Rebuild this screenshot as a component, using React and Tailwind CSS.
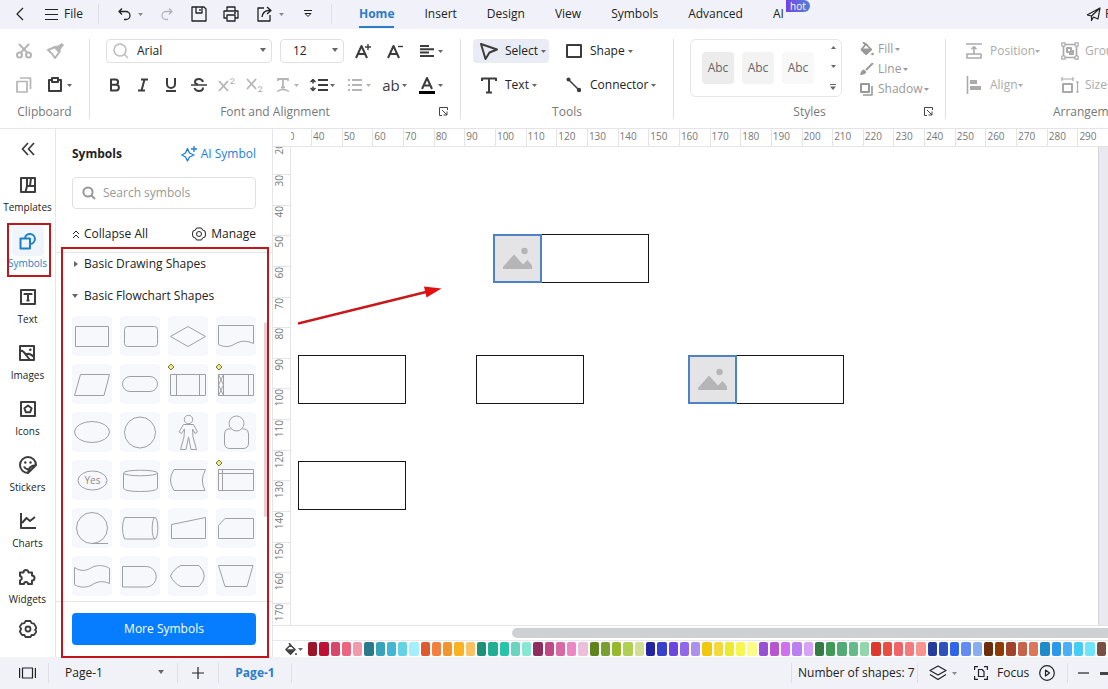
import { useState } from 'react';

const Svg = ({ w = 20, h = 20, sw = 2, className = '', children }) => (
    <svg
        width={w}
        height={h}
        viewBox={`0 0 ${w} ${h}`}
        fill="none"
        stroke="currentColor"
        strokeWidth={sw}
        strokeLinejoin="round"
        className={`shrink-0 ${className}`}
        aria-hidden="true"
    >
        {children}
    </svg>
);

const Caret = ({ className = 'text-[#666]' }) => (
    <svg width="5" height="3" viewBox="0 0 5 3" className={`shrink-0 ${className}`} aria-hidden="true">
        <path d="M0 0H5L2.5 3Z" fill="currentColor" />
    </svg>
);

const BigCaret = ({ className = '' }) => (
    <svg width="6" height="4" viewBox="0 0 6 4" className={`pointer-events-none absolute ${className}`} aria-hidden="true">
        <path d="M0 0H6L3 4Z" fill="#666" />
    </svg>
);

const Divider = ({ className = 'h-5' }) => <div className={`w-px shrink-0 bg-[#dfe0e6] ${className}`} />;

/* ---------- top bar ---------- */

const TABS = ['Home', 'Insert', 'Design', 'View', 'Symbols', 'Advanced'];

const TopBar = () => {
    const [active, setActive] = useState('Home');
    return (
        <header className="flex h-[29px] shrink-0 items-center overflow-hidden bg-[#f1f2f9] pb-px text-[#222]">
            <button aria-label="Back" className="ml-[13px] w-[14px]">
                <Svg w={14} h={16} sw={1.2}><path d="M10 2L4 8L10 14" /></Svg>
            </button>
            <button className="ml-[18px] flex w-[53px] items-center gap-[6px]">
                <Svg w={13} h={13} sw={1.2}><path d="M0 1.5H13M0 6.5H13M0 11.5H13" /></Svg>
                File
            </button>
            <Divider />
            <div className="flex w-[232px] shrink-0 items-center">
                <button aria-label="Undo" className="ml-[18px] flex items-center gap-[7px]">
                    <Svg w={14} h={14} sw={1.3}><path d="M5 1.5L2 4.5L5 7.5M2 4.5H9A4 4 0 0 1 9 12.5H7" /></Svg>
                    <Caret className="text-[#888]" />
                </button>
                <button aria-label="Redo" className="ml-[17px] text-[#b3b4ba]">
                    <Svg w={14} h={14} sw={1.3}><path d="M9 1.5L12 4.5L9 7.5M12 4.5H6A4 4 0 0 0 6 12.5H8" /></Svg>
                </button>
                <button aria-label="Save" className="ml-[17px]">
                    <Svg w={16} h={16} sw={1.3}><path d="M1 1H13L15 3V15H1ZM5 1V7H11V1M9 3V5" /></Svg>
                </button>
                <button aria-label="Print" className="ml-[16px]">
                    <Svg w={16} h={16} sw={1.3}><path d="M4 5V1H12V5M4 12H1V5H15V12H12M4 9H12V15H4ZM11 7H13" /></Svg>
                </button>
                <button aria-label="Export" className="ml-[18px] flex items-center gap-[6px]">
                    <Svg w={16} h={16} sw={1.3}><path d="M7 2H1V15H13V9M10 1L14 4.5L10 8M14 4.5H11Q6 5 5 11" /></Svg>
                    <Caret className="text-[#888]" />
                </button>
                <button aria-label="Customize toolbar" className="ml-[20px]">
                    <Svg w={8} h={8} sw={1}><path d="M0 0.5H8M1 3.5H7L4 6.5Z" /></Svg>
                </button>
            </div>
            <Divider />
            <nav className="flex h-full flex-1 items-center gap-[30px] pl-[27px]">
                {TABS.map((tab) => (
                    <button
                        key={tab}
                        onClick={() => setActive(tab)}
                        className={`h-full border-y-2 border-t-transparent ${active === tab ? 'border-b-[#2a7cc7] font-bold text-[#2a7cc7]' : 'border-b-transparent'}`}
                    >
                        {tab}
                    </button>
                ))}
                <button className="relative h-full">
                    AI
                    <span className="absolute left-full top-0 ml-[2px] h-3 w-6 rounded-tl-sm rounded-r-full bg-linear-to-r from-[#7341e0] to-[#4a80d8] text-center text-[10px] leading-3 text-white">
                        hot
                    </span>
                </button>
            </nav>
            <button aria-label="Publish" className="flex w-[22px] items-center gap-[4px] overflow-hidden">
                <Svg w={15} h={15} sw={1.2}><path d="M1 8L14 1L12 12L7.5 10L5.5 13.5V9L14 1M5.5 9L1 8" /></Svg>
                <span>P</span>
            </button>
        </header>
    );
};

/* ---------- ribbon ---------- */

const Group = ({ label, launcher, className = '', children }) => (
    <section className={`relative flex h-full shrink-0 flex-col ${className}`}>
        <div className="flex h-[72px] flex-col">{children}</div>
        <div className="flex h-5 items-center justify-center text-[#777]">{label}</div>
        {launcher && (
            <button aria-label={`${label} options`} className="absolute bottom-3 right-3 text-[#444]">
                <Svg w={9} h={9} sw={1}><path d="M8.5 3V0.5H0.5V8.5H3M3 3L8 8M8 4.5V8H4.5" /></Svg>
            </button>
        )}
    </section>
);

const DropIcon = ({ label, muted, children }) => (
    <button aria-label={label} className={`flex w-9 items-center gap-px pl-1 ${muted ? 'text-[#b5b5b5]' : 'text-[#3c3c3c]'}`}>
        <span className="flex w-5 justify-center">{children}</span>
        <Caret className={muted ? 'text-[#b5b5b5]' : 'text-[#666]'} />
    </button>
);

const FlatIcon = ({ label, muted, children }) => (
    <button aria-label={label} className={`flex w-7 justify-center ${muted ? 'text-[#b5b5b5]' : 'text-[#3c3c3c]'}`}>
        {children}
    </button>
);

const ToolButton = ({ icon, label, className = '' }) => (
    <button className={`flex h-6 items-center rounded ${className}`}>
        <span className="flex w-[32px] justify-center text-[#3c3c3c]">{icon}</span>
        {label}
        <Caret className="ml-[3px] text-[#666]" />
    </button>
);

const StyleButton = ({ icon, label }) => (
    <button className="flex h-5 items-center">
        <span className="flex w-[24px] pl-[6px]">{icon}</span>
        {label}
        <Caret className="ml-[2px]" />
    </button>
);

const ArrangeButton = ({ icon, label }) => (
    <button className="flex h-6 w-[95px] items-center">
        <span className="flex w-[24px]">{icon}</span>
        {label}
        <Caret className="text-[#aaa]" />
    </button>
);

const Ribbon = () => (
    <div className="flex h-[100px] shrink-0 overflow-hidden border-b border-[#e4e4e8] bg-white pt-[1px]">
        <Group label="Clipboard" className="w-[89px]">
            <div className="mt-[9px] flex h-6 items-center gap-[14px] pl-4 text-[#b5b5b5]">
                <button aria-label="Cut">
                    <Svg w={16} h={16} sw={2}><circle cx="3.5" cy="12" r="2.5" /><circle cx="12.5" cy="12" r="2.5" /><path d="M3 1L11.5 10M13 1L4.5 10" /></Svg>
                </button>
                <button aria-label="Format painter">
                    <Svg w={18} h={16} sw={2}>
                        <path d="M2 7L9 4L13.5 9L9 15Q7 11 2 7Z" />
                        <path d="M8 4L12 3L16 0.5L17.5 2L14.5 6L13.5 10Z" fill="currentColor" strokeWidth="1" />
                    </Svg>
                </button>
            </div>
            <div className="mt-[10px] flex h-6 items-center pl-4 text-[#b5b5b5]">
                <button aria-label="Copy" className="w-8">
                    <Svg w={16} h={16} sw={1.7}><path d="M1 4.5H11V15H1ZM4 1H14.5V12" /></Svg>
                </button>
                <button aria-label="Paste" className="flex items-center gap-[5px] text-[#3c3c3c]">
                    <Svg w={14} h={16} sw={2}><path d="M4 3H1V14H13V3H10M4 1H10V5H4Z" /></Svg>
                    <Caret />
                </button>
            </div>
        </Group>
        <Divider className="mt-[9px] h-[80px]" />

        <Group label="Font and Alignment" launcher className="w-[370px]">
            <div className="mt-[9px] flex h-6 items-center pl-4">
                <div className="relative flex h-6 w-[166px] items-center rounded border border-[#e0e0e0]">
                    <Svg w={16} h={16} sw={1.5} className="absolute left-[6px] text-[#bbb]"><circle cx="7" cy="7" r="6" /><path d="M11 11L15 15" /></Svg>
                    <select aria-label="Font family" defaultValue="Arial" className="h-full w-full appearance-none bg-transparent pl-[30px]">
                        <option>Arial</option>
                    </select>
                    <BigCaret className="right-[5px] top-[8px]" />
                </div>
                <div className="relative ml-[8px] flex h-6 w-[64px] items-center rounded border border-[#e0e0e0]">
                    <select aria-label="Font size" defaultValue="12" className="h-full w-full appearance-none bg-transparent pl-[12px]">
                        <option>12</option>
                    </select>
                    <BigCaret className="right-[5px] top-[8px]" />
                </div>
                <div className="ml-[5px] flex gap-1">
                    <FlatIcon label="Increase font size">
                        <Svg w={16} h={16} sw={2}><path d="M1 15L6.5 3L12 15M3 11H10" /><path d="M13 1V7M10 4H16" strokeWidth="1.4" /></Svg>
                    </FlatIcon>
                    <FlatIcon label="Decrease font size">
                        <Svg w={16} h={16} sw={2}><path d="M1 15L6.5 3L12 15M3 11H10" /><path d="M11 3.5H16" strokeWidth="1.4" /></Svg>
                    </FlatIcon>
                    <DropIcon label="Alignment">
                        <Svg w={14} h={12} sw={2}><path d="M0 1H9M0 4.3H14M0 7.6H9M0 11H14" /></Svg>
                    </DropIcon>
                </div>
            </div>
            <div className="mt-[10px] flex h-6 items-center pl-[11px]">
                <FlatIcon label="Bold">
                    <Svg w={12} h={14} sw={2}><path d="M2 1.5H6.5A2.6 2.6 0 0 1 6.5 6.7H2ZM2 6.7H7A2.8 2.8 0 0 1 7 12.5H2Z" /></Svg>
                </FlatIcon>
                <FlatIcon label="Italic">
                    <Svg w={12} h={14} sw={2}><path d="M4 1.5H11M1 12.5H8M7.5 1.5L4.5 12.5" /></Svg>
                </FlatIcon>
                <FlatIcon label="Underline">
                    <Svg w={12} h={14} sw={2}><path d="M2 0V6A4 4 0 0 0 10 6V0M1 13H11" /></Svg>
                </FlatIcon>
                <FlatIcon label="Strikethrough">
                    <Svg w={16} h={14} sw={2}><path d="M12 4Q11 1 8 1Q4 1 4 4Q4 6 7 6.5M12 9.5Q12 13 8 13Q4.5 13 3.5 10" /><path d="M0 7H16" strokeWidth="1.5" /></Svg>
                </FlatIcon>
                <FlatIcon label="Superscript" muted>
                    <Svg w={18} h={14} sw={1.8}><path d="M1 3L10 13M10 3L1 13" /><path d="M12.5 2Q12.5 0.6 14.2 0.6Q16 0.6 16 2Q16 3 12.5 5.5H16.5" strokeWidth="1" /></Svg>
                </FlatIcon>
                <FlatIcon label="Subscript" muted>
                    <Svg w={18} h={14} sw={1.8}><path d="M1 1L10 11M10 1L1 11" /><path d="M12.5 10Q12.5 8.6 14.2 8.6Q16 8.6 16 10Q16 11 12.5 13.5H16.5" strokeWidth="1" /></Svg>
                </FlatIcon>
                <DropIcon label="Text direction" muted>
                    <Svg w={14} h={14} sw={1.8}><path d="M2 3V1H12V3M7 1V10M5 9.5H9" /><path d="M1 13.5Q7 9.5 13 13.5" strokeWidth="1.3" /></Svg>
                </DropIcon>
                <DropIcon label="Line spacing">
                    <Svg w={18} h={14} sw={2}><path d="M8 2H18M8 7H18M8 12H18" /><path d="M0.5 4L3 1.5L5.5 4M3 1.5V5.5M0.5 10L3 12.5L5.5 10M3 12.5V8.5" strokeWidth="1.5" /></Svg>
                </DropIcon>
                <DropIcon label="List" muted>
                    <Svg w={14} h={14} sw={1.8}><path d="M4 2H14M4 7H14M4 12H14M0 2H2M0 7H2M0 12H2" /></Svg>
                </DropIcon>
                <DropIcon label="Letter case"><span className="text-[15px] leading-5">ab</span></DropIcon>
                <DropIcon label="Font color">
                    <Svg w={16} h={18} sw={2}><path d="M3 13L8 2L13 13M5 9.5H11" /><path d="M0 16.5H16" stroke="#000" strokeWidth="3" /></Svg>
                </DropIcon>
            </div>
        </Group>
        <Divider className="mt-[9px] h-[80px]" />

        <Group label="Tools" className="w-[212px]">
            <div className="grid grid-cols-[85px_1fr] gap-y-[10px] pl-3 pt-[9px]">
                <ToolButton
                    label="Select"
                    className="w-[76px] bg-[#e9ecf4]"
                    icon={<Svg w={18} h={18} sw={2}><path d="M1 2L17 7.5L9.5 10.5L5.5 17Z" /></Svg>}
                />
                <ToolButton label="Shape" icon={<Svg w={16} h={14} sw={2}><path d="M1 1H15V13H1Z" /></Svg>} />
                <ToolButton label="Text" icon={<Svg w={16} h={17} sw={2}><path d="M1 4V1.5H15V4M8 1.5V15.5M5 15.5H11" /></Svg>} />
                <ToolButton
                    label="Connector"
                    icon={<Svg w={16} h={16} sw={1.5}><path d="M2.5 2.5L13 13" /><circle cx="2.5" cy="2.5" r="2" fill="currentColor" stroke="none" /><circle cx="13" cy="13" r="2.2" fill="currentColor" stroke="none" /></Svg>}
                />
            </div>
        </Group>
        <Divider className="mt-[9px] h-[80px]" />

        <Group label="Styles" launcher className="w-[271px]">
            <div className="flex pl-4 pt-[9px]">
                <div className="flex h-[58px] w-[152px] items-center gap-2 rounded-md border border-[#e6e6e6] pl-[11px] text-[#666]">
                    <button className="h-8 w-8 rounded bg-[#ececec]">Abc</button>
                    <button className="h-8 w-8 rounded bg-[#f3f3f3]">Abc</button>
                    <button className="h-8 w-8 rounded bg-[#f8f8f8]">Abc</button>
                    <div className="ml-[8px] flex h-[44px] flex-col items-center justify-between">
                        <button aria-label="Previous styles" className="flex"><Caret className="rotate-180" /></button>
                        <button aria-label="Next styles" className="flex"><Caret /></button>
                        <button aria-label="All styles" className="flex">
                            <Svg w={6} h={6} sw={1}><path d="M0 0.5H6" /><path d="M0 2.5H6L3 6Z" fill="currentColor" stroke="none" /></Svg>
                        </button>
                    </div>
                </div>
                <div className="ml-3 flex flex-col text-[#999]">
                    <StyleButton label="Fill" icon={<Svg w={14} h={14} sw={1.8}><path d="M6 2L11 7.5L6 12L1.5 7.5ZM3 0L6 3" /><path d="M2 7.5H11L6 12Z" fill="currentColor" /><circle cx="12.5" cy="12" r="1.3" fill="currentColor" stroke="none" /></Svg>} />
                    <StyleButton label="Line" icon={<Svg w={14} h={12} sw={2}><path d="M13 0L6 7" /><path d="M0 12Q1 7 4 6.5L6.5 9Q5 12 0 12Z" fill="currentColor" stroke="none" /></Svg>} />
                    <StyleButton label="Shadow" icon={<Svg w={13} h={13} sw={2}><path d="M1 1H9V9H1Z" /><path d="M3 12H12V3" strokeWidth="1.6" /></Svg>} />
                </div>
            </div>
        </Group>
        <Divider className="mt-[9px] h-[80px]" />

        <Group label="Arrangement" className="w-[288px]">
            <div className="grid grid-cols-[95px_95px] gap-y-[10px] pl-5 pt-[9px] text-[#aaa]">
                <ArrangeButton label="Position" icon={<Svg w={16} h={16} sw={1.6}><path d="M0 1H16M1 11H15V15H1ZM8 11V4M5.5 6L8 3.8L10.5 6" /></Svg>} />
                <ArrangeButton label="Group" icon={<Svg w={18} h={18} sw={1.7}><path d="M2.5 2.5H15.5V15.5H2.5Z" /><path d="M0.8 0.8H4V4H0.8ZM14 0.8H17.2V4H14ZM0.8 14H4V17.2H0.8ZM14 14H17.2V17.2H14Z" fill="#fff" strokeWidth="1.2" /><path d="M6 6H10V10H6ZM8 12H12V8" strokeWidth="2" /></Svg>} />
                <ArrangeButton label="Align" icon={<Svg w={16} h={18} sw={1.6}><path d="M1.5 0V18" /><path d="M4 4H11V8H4ZM4 10H15V14H4Z" fill="currentColor" stroke="none" /></Svg>} />
                <ArrangeButton label="Size" icon={<Svg w={18} h={16} sw={2}><path d="M1 0V4M12 0V4M1 2H12M15 5H18M15 15H18M16.5 5V15" strokeWidth="1.2" /><path d="M2 7H11V15H2Z" /></Svg>} />
            </div>
        </Group>
    </div>
);

/* ---------- left rail ---------- */

const GEAR = 'M6.5 2H11.5L12.5 4.2L15 4.6L17.5 9L16 10.8L17.5 12.5L15 16L12.5 16L11.5 18H6.5L5.5 16L3 16L0.8 12.5L2.2 10L0.8 7.5L3 4.5L5.5 4.2Z';

const RAIL = [
    { name: 'Templates', icon: <path d="M2 2H16V16H2ZM8 2V10L6.5 16M8 10H16M12 2L11 10" /> },
    { name: 'Symbols', icon: <path d="M1.5 6.5H11V16.5H1.5ZM6 6A5 5 0 1 1 11 12" /> },
    { name: 'Text', icon: <><path d="M2 2H16V16H2Z" /><path d="M5.5 7V6H12.5V7M9 6V12.5M7.5 12.5H10.5" /></> },
    { name: 'Images', icon: <><path d="M2 2H16V16H2ZM2 6Q6 7 8 11Q11 8 16 13M8 11L12 16" /><circle cx="12.3" cy="5.8" r="1.3" fill="currentColor" stroke="none" /></> },
    { name: 'Icons', icon: <path d="M2 2H16V16H2ZM9 5.5L12.6 8.2L11.2 12.2H6.8L5.4 8.2Z" /> },
    { name: 'Stickers', icon: <><path d="M17 9A8 8 0 1 0 9 17L17 9ZM9 17Q9 10 17 9M5 10.5Q6 13 9 13.2" /><circle cx="6.3" cy="6.5" r="1.2" fill="currentColor" stroke="none" /><circle cx="11.5" cy="6.5" r="1.2" fill="currentColor" stroke="none" /></> },
    { name: 'Charts', icon: <path d="M2 1V16H17M3 11L7.5 6L11 9L16 5" /> },
    { name: 'Widgets', icon: <path d="M2 4.5H5.5A2.5 2.5 0 1 1 10.5 4.5H14V7.5A2.5 2.5 0 1 1 14 12.5V16H10A2 2 0 0 0 6 16H2V12.5A2.3 2.3 0 0 0 2 8Z" /> },
];

const Rail = () => {
    const [active, setActive] = useState('Symbols');
    return (
        <aside className="relative flex w-14 shrink-0 flex-col items-center border-r border-[#e6e6ea] text-[#3c3c3c]">
            <button aria-label="Collapse panel" className="mt-[12px] mb-[13px] h-4">
                <Svg w={14} h={16} sw={1.8}><path d="M7 2L1.5 8L7 14M13 2L7.5 8L13 14" /></Svg>
            </button>
            {RAIL.map(({ name, icon }) => (
                <button
                    key={name}
                    onClick={() => setActive(name)}
                    className={`flex h-14 flex-col items-center text-[10px] leading-[14px] ${active === name ? 'text-[#1d7fca]' : ''}`}
                >
                    <span className={`flex h-[30px] w-8 items-center justify-center rounded ${active === name ? 'bg-[#f0f4fb]' : ''}`}>
                        <Svg w={18} h={18}>{icon}</Svg>
                    </span>
                    <span className={active === name ? '' : 'text-[#222]'}>{name}</span>
                </button>
            ))}
            <button aria-label="Settings" className="mt-px">
                <Svg w={18} h={20} sw={1.8}><path d={GEAR} /><circle cx="9" cy="10" r="2.5" /></Svg>
            </button>
            <div className="pointer-events-none absolute left-[7px] top-[94px] h-[54px] w-11 border-2 border-[#c2161b]" />
        </aside>
    );
};

/* ---------- symbol panel ---------- */

const Pin = () => <path d="M3 0L6 3L3 6L0 3Z" fill="#f1ee7e" stroke="#77753a" />;

// Flowchart outlines, each on a 40 x 40 tile
const SHAPES = [
    ['Process', <path d="M3.5 10.5H36.5V30.5H3.5Z" />],
    ['Alternate process', <rect x="4.5" y="10.5" width="33" height="20" rx="3" />],
    ['Decision', <path d="M2.5 20.5L20 10.5L37.5 20.5L20 30.5Z" />],
    ['Document', <path d="M2.5 9.5H37.5V27.5C28 23 22 26 17 29C12 31.5 6 30.5 2.5 28.5Z" />],
    ['Data', <path d="M8.5 10.5H37.5L32 31.5H2.5Z" />],
    ['Terminator', <rect x="2.5" y="12.5" width="35" height="15" rx="7.5" />],
    ['Predefined process', <path d="M2.5 10.5H37.5V31.5H2.5ZM8.5 10.5V31.5M31.5 10.5V31.5" />],
    ['Stored process', <path d="M2.5 10.5H37.5V31.5H2.5ZM7.5 10.5V31.5M32.5 10.5V31.5M2.5 10.5L7.5 21L2.5 31.5M7.5 10.5L2.5 21L7.5 31.5" />],
    ['Ellipse', <ellipse cx="20" cy="20" rx="17.5" ry="10.5" />],
    ['Circle', <circle cx="20" cy="20.5" r="15.5" />],
    ['Person', <><circle cx="20.5" cy="7.5" r="4.2" /><path d="M15.5 12.5H25.5L29.5 20L27 21.5L24.5 17L25 25L28.5 37.5H23L20.5 25L18 37.5H12.5L16 25L16.5 17L13.5 21.5L11 20Z" /></>],
    ['User', <><circle cx="20.5" cy="11.5" r="7.5" /><path d="M14.5 17H12Q8.5 17.5 8.5 22V31Q8.5 36.5 14 36.5H27Q32.5 36.5 32.5 31V22Q32.5 17.5 29 17H26.5" /></>],
    ['Yes or no', <><ellipse cx="20.5" cy="20.5" rx="14.5" ry="9.5" /><text x="20.5" y="24" textAnchor="middle" fontSize="10" fill="#888" stroke="none">Yes</text></>],
    ['Database', <><ellipse cx="20.5" cy="13" rx="17" ry="2.8" /><path d="M3.5 13V28.5Q6 31.5 20.5 31.5T37.5 28.5V13" /></>],
    ['Stored data', <path d="M6 9.5H37.5Q31.5 20 37 30.5H6Q-1 20 6 9.5Z" />],
    ['Internal storage', <path d="M2.5 9.5H37.5V30.5H2.5ZM6.5 9.5V30.5M2.5 13.5H37.5" />],
    ['Sequential data', <><circle cx="20" cy="20" r="15.5" /><path d="M20 35.5H36" /></>],
    ['Direct data', <><path d="M35 9.5H4.5Q0.5 20 4.5 31H35" /><ellipse cx="35" cy="20.2" rx="2.8" ry="10.8" /></>],
    ['Manual input', <path d="M3.5 16.5L37.5 9.5V30.5H3.5Z" />],
    ['Card', <path d="M9 10.5H37.5V30.5H2.5V17.5Z" />],
    ['Paper tape', <path d="M2.5 11.5C12 18 18 12 22 10.5C28 8.5 34 10 37.5 12.5V27.5C30 24 24 26 19 29.5C13 32 7 31.5 2.5 28.5Z" />],
    ['Delay', <path d="M2.5 10.5H27A10.3 10.3 0 0 1 27 31H2.5Z" />],
    ['Display', <path d="M13 9.5H31Q41.5 20 31 30.5H13Q6 27.5 2.5 20Q6 12.5 13 9.5Z" />],
    ['Manual operation', <path d="M2.5 9.5H37L31 30.5H9Z" />],
];
const PINNED = ['Predefined process', 'Stored process', 'Internal storage'];

const SymbolPanel = () => {
    const [query, setQuery] = useState('');
    return (
        <aside className="relative flex w-[217px] shrink-0 flex-col border-r border-[#e6e6ea] text-[#222]">
            <div className="flex h-[124px] shrink-0 flex-col border-b border-[#e6e6ea] px-4 pt-4">
                <div className="flex h-[18px] items-center justify-between">
                    <h2 className="font-bold">Symbols</h2>
                    <a href="#ai-symbol" className="flex items-center gap-[4px] text-[#1d7fd6]">
                        <Svg w={16} h={16} sw={1.3}><path d="M6.5 2.5L8.5 7L13 9L8.5 11L6.5 15L4.5 11L0.8 9L4.5 7ZM13 0V6M10 3H16" /></Svg>
                        AI Symbol
                    </a>
                </div>
                <label className="mt-[14px] flex h-8 items-center gap-[7px] rounded border border-[#e0e0e0] pl-[9px]">
                    <Svg w={14} h={14} className="text-[#999]"><circle cx="6" cy="6" r="4.6" /><path d="M9.5 9.5L13 13" /></Svg>
                    <input
                        aria-label="Search symbols"
                        value={query}
                        onChange={(e) => setQuery(e.target.value)}
                        placeholder="Search symbols"
                        className="min-w-0 flex-1 outline-none placeholder:text-[#999]"
                    />
                </label>
                <div className="mt-[16px] flex h-[18px] items-center justify-between">
                    <button className="flex items-center gap-[4px]">
                        <Svg w={8} h={9} sw={1}><path d="M1 4L4 1L7 4M1 8L4 5L7 8" /></Svg>
                        Collapse All
                    </button>
                    <button className="flex items-center gap-[5px]">
                        <Svg w={14} h={14} sw={1}><path d="M4.5 1H9.5L10.5 3L13 4L13.5 7L13 10L10.5 11L9.5 13H4.5L3.5 11L1 10L0.5 7L1 4L3.5 3Z" /><circle cx="7" cy="7" r="2.5" /></Svg>
                        Manage
                    </button>
                </div>
            </div>
            <div className="min-h-0 flex-1 overflow-hidden px-4">
                <button className="flex h-[22px] items-center gap-[6px]">
                    <Svg w={6} h={6} sw={0} className="text-[#666]"><path d="M2 0L6 3L2 6Z" fill="currentColor" /></Svg>
                    Basic Drawing Shapes
                </button>
                <button className="mt-[10px] flex h-[22px] items-center gap-[6px]">
                    <Svg w={6} h={4} sw={0} className="text-[#666]"><path d="M0 0H6L3 4Z" fill="currentColor" /></Svg>
                    Basic Flowchart Shapes
                </button>
                <div className="mt-[9px] grid grid-cols-4 gap-2">
                    {SHAPES.map(([name, shape]) => (
                        <button key={name} aria-label={name} className="h-10 w-10 rounded bg-[#f7f8fc] text-[#a0a0a4]">
                            <Svg w={40} h={40} sw={1} className="overflow-visible">
                                {shape}
                                {PINNED.includes(name) && <Pin />}
                            </Svg>
                        </button>
                    ))}
                </div>
            </div>
            <div className="h-[56px] shrink-0 border-t border-[#e6e6ea] px-4 pt-[11px]">
                <button className="h-8 w-full rounded bg-[#067dff] text-white">More Symbols</button>
            </div>
            <div className="absolute right-[5px] top-[193px] h-[195px] w-[3px] rounded bg-[#efcdd2]" />
            <div className="pointer-events-none absolute -bottom-px left-[5px] right-[3px] top-[118px] border-2 border-[#c2161b]" />
        </aside>
    );
};

/* ---------- canvas ---------- */

const TOP_MARKS = Array.from({ length: 26 }, (_, i) => 40 + i * 10);
const SIDE_MARKS = Array.from({ length: 14 }, (_, i) => 30 + i * 10);

const Box = ({ className }) => <div className={`absolute h-[49px] w-[108px] border border-[#15151c] bg-white ${className}`} />;

const Picture = ({ className }) => (
    <div className={`absolute h-[49px] w-[49px] border-2 border-[#4d82c4] bg-[#e4e4e6] ${className}`}>
        <svg width="45" height="45" viewBox="0 0 45 45" fill="#b5b5b7" aria-hidden="true">
            <path d="M8 33V31L19 18.5L28 28.5L32.5 24L37 29.5V33Z" />
            <circle cx="29.5" cy="15" r="3.2" />
        </svg>
    </div>
);

const SWATCHES = [
    '#9b1428', '#c01036', '#d6486a', '#ec6480', '#f19aac', '#2b7a8c', '#38a3bd', '#42b6d3', '#62d3e6', '#a4effc',
    '#e05a2f', '#f2803e', '#f0962a', '#fbb321', '#fbc263', '#1c9078', '#21ae94', '#25c4ab', '#6bd3c1', '#88e6d4',
    '#8f2c60', '#c04a88', '#d968a5', '#ef86c4', '#eac0d9', '#5e841c', '#789f32', '#96b92b', '#b0cf53', '#d0df94',
    '#2424a0', '#3840cc', '#6b45de', '#9168e8', '#ad90ee', '#f2c80e', '#f3d93d', '#eaea30', '#f7f550', '#fdfc86',
    '#9850d4', '#b954d0', '#cf70ec', '#bc80ee', '#d8a2f7', '#347c46', '#409a58', '#54aa76', '#66b988', '#92d6ac',
    '#dd3a2d', '#e94f41', '#f06468', '#f57a7b', '#f99390', '#253d98', '#2f51bd', '#3165e8', '#628bf3', '#88aef0',
    '#6c2d0c', '#8d3c06', '#a0432b', '#c5644a', '#dc775b', '#218bca', '#2b98ed', '#4aaef8', '#45cdf5', '#6fe4fa',
    '#795040',
];

const Canvas = () => (
    <main className="flex min-w-0 flex-1 flex-col">
        <div className="flex h-[18px] shrink-0 border-b border-[#e4e4e6] pl-[18px] text-[10px] leading-[14px] text-[#777]">
            <div className="w-5 overflow-hidden"><span className="-ml-[8px]">30</span></div>
            <div className="flex min-w-0 flex-1">
                {TOP_MARKS.map((n) => (
                    <div key={n} className="min-w-0 flex-1 border-l border-[#e4e4e6] pl-px">{n}</div>
                ))}
            </div>
        </div>
        <div className="flex min-h-0 flex-1 border-b border-[#e4e4e6]">
            <div className="flex w-[18px] shrink-0 flex-col border-r border-[#e4e4e6] text-[10px] leading-[12px] text-[#777]">
                <div className="flex h-[27px] items-start overflow-hidden">
                    <span className="-mt-[4px] rotate-180 [writing-mode:vertical-rl]">20</span>
                </div>
                {SIDE_MARKS.map((n) => (
                    <div key={n} className="flex min-h-0 flex-1 items-start border-t border-[#e4e4e6]">
                        <span className="rotate-180 [writing-mode:vertical-rl]">{n}</span>
                    </div>
                ))}
                <div className="flex h-[22px] items-start border-t border-[#e4e4e6]">
                    <span className="rotate-180 [writing-mode:vertical-rl]">170</span>
                </div>
            </div>
            <div className="flex-1 overflow-hidden bg-[#e9e9ef] pr-[9px]">
                <div className="relative h-full border-r border-[#d4d4da] bg-white">
                    <Box className="left-[250px] top-[87px]" />
                    <Picture className="left-[202px] top-[87px]" />
                    <Box className="left-[7px] top-[208px]" />
                    <Box className="left-[185px] top-[208px]" />
                    <Box className="left-[445px] top-[208px]" />
                    <Picture className="left-[397px] top-[208px]" />
                    <Box className="left-[7px] top-[314px]" />
                    <svg width="144" height="40" viewBox="0 0 144 40" className="absolute left-[7px] top-[138px]" aria-hidden="true">
                        <path d="M0 38.5L128 7" stroke="#c8181a" strokeWidth="2.6" />
                        <path d="M126 1.5L143.5 3.5L128.5 12.5Z" fill="#e60f0f" />
                    </svg>
                </div>
            </div>
        </div>
        <div className="flex h-[15px] shrink-0 items-center border-b border-[#e8e8ec] pl-[239px]">
            <div className="h-[10px] flex-1 rounded-l-full bg-[#cfd0d2]" />
        </div>
        <div className="flex h-[16px] shrink-0 items-center">
            <button aria-label="Fill color" className="flex w-[35px] items-center gap-px pl-[12px] text-[#444]">
                <Svg w={12} h={13} sw={1.5}><path d="M5.5 2L10 6.5L5.5 11L1 6.5ZM4 0L6 2.5" /><path d="M1.5 7H9.5L5.5 11Z" fill="currentColor" /><circle cx="11" cy="11" r="1" fill="currentColor" stroke="none" /></Svg>
                <Caret />
            </button>
            <div className="flex min-w-0 flex-1">
                {SWATCHES.map((color) => (
                    <div key={color} className="min-w-0 flex-1 pr-[2px]">
                        <button aria-label={color} className="block h-[14px] w-full rounded-[2px]" style={{ backgroundColor: color }} />
                    </div>
                ))}
            </div>
        </div>
    </main>
);

/* ---------- status bar ---------- */

const StatusBar = () => (
    <footer className="flex h-8 shrink-0 items-center overflow-hidden bg-[#f1f2f8] text-[#222]">
        <button aria-label="Page view" className="flex w-12 pl-[19px]">
            <Svg w={17} h={12} sw={1.2}><path d="M0.6 1V11M16.4 1V11M3.5 1H13.5V11H3.5Z" /></Svg>
        </button>
        <Divider />
        <div className="relative flex h-full w-[128px] items-center">
            <select aria-label="Page" defaultValue="Page-1" className="h-full w-full appearance-none bg-transparent pl-4">
                <option>Page-1</option>
            </select>
            <BigCaret className="right-[13px] top-[13px]" />
        </div>
        <Divider />
        <button aria-label="Add page" className="flex w-10 justify-center">
            <Svg w={12} h={12} sw={1.2}><path d="M6 0V12M0 6H12" /></Svg>
        </button>
        <Divider />
        <button className="w-[72px] font-bold text-[#2a7cc7]">Page-1</button>
        <Divider />
        <div className="flex-1" />
        <Divider />
        <span className="w-[125px] whitespace-nowrap pl-[6px]">Number of shapes: 7</span>
        <Divider />
        <button aria-label="Layers" className="ml-[11px] flex w-[45px] items-center gap-[5px]">
            <Svg w={18} h={16} sw={1.2}><path d="M9 1L17 5.5L9 10L1 5.5ZM1 9.5L9 14.5L17 9.5" /></Svg>
            <Caret className="text-[#888]" />
        </button>
        <button className="flex w-[65px] items-center gap-[9px]">
            <Svg w={14} h={14} sw={1.2}><path d="M0.6 4V0.6H4M10 0.6H13.4V4M13.4 10V13.4H10M4 13.4H0.6V10M4.5 3.5H8L10 5.5V10.5H4.5Z" /></Svg>
            Focus
        </button>
        <button aria-label="Play" className="flex w-[28px]">
            <Svg w={16} h={16} sw={1.2}><circle cx="8" cy="8" r="7.3" /><path d="M6.5 5L10.5 8L6.5 11Z" /></Svg>
        </button>
        <Divider />
        <button aria-label="Zoom out" className="ml-[10px] w-[22px]">
            <Svg w={11} h={2} sw={1.2}><path d="M0 1H11" /></Svg>
        </button>
        <input aria-label="Zoom" type="range" className="h-[3px] w-2 appearance-none bg-[#444] [&::-webkit-slider-thumb]:appearance-none" />
    </footer>
);

export default function App() {
    return (
        <div className="flex h-screen flex-col overflow-hidden bg-white font-['Open_Sans',sans-serif] text-[12px] leading-4 text-[#222]">
            <TopBar />
            <Ribbon />
            <div className="flex min-h-0 flex-1">
                <Rail />
                <SymbolPanel />
                <Canvas />
            </div>
            <StatusBar />
        </div>
    );
}
